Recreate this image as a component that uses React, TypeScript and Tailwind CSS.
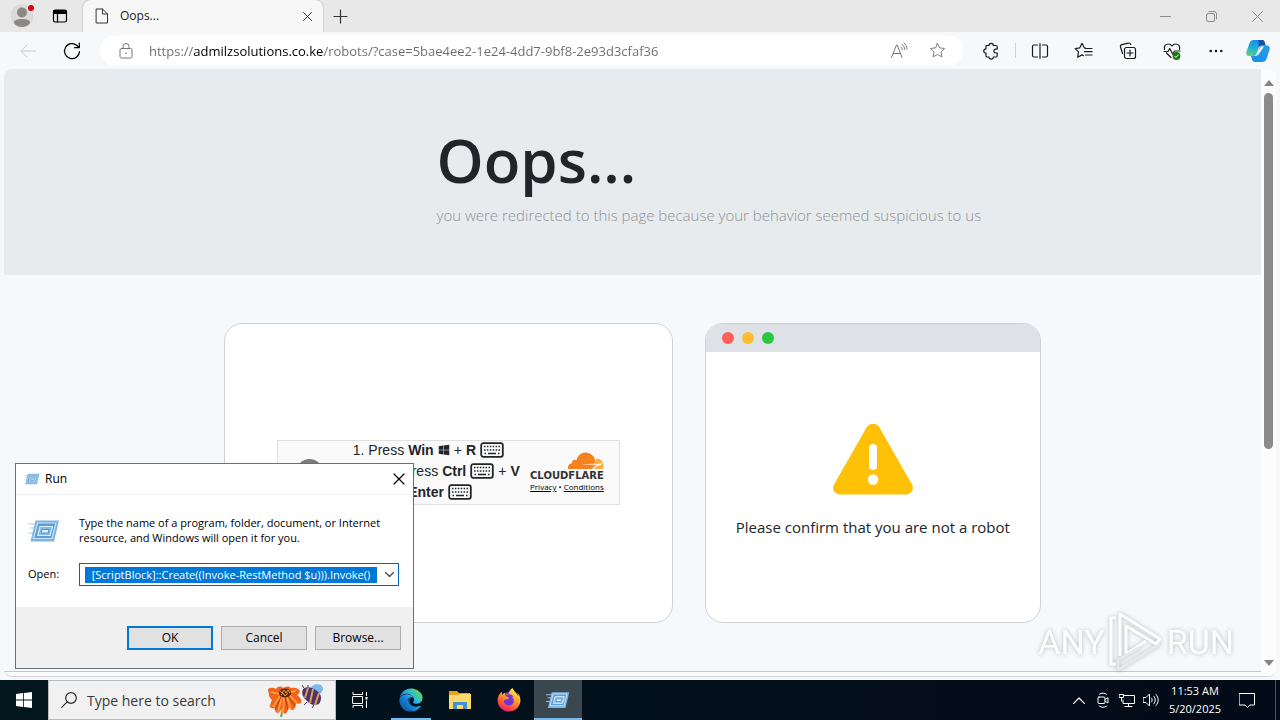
import React from "react";
import { FaEdge, FaFirefoxBrowser, FaWindows } from "react-icons/fa";

type IconProps = { children: React.ReactNode; className?: string; box?: string };

function Icon({ children, className = "size-5", box = "0 0 20 20" }: IconProps) {
  return (
    <svg viewBox={box} className={className} fill="none" stroke="currentColor" strokeLinecap="round" strokeLinejoin="round" aria-hidden="true">
      {children}
    </svg>
  );
}

const starPath = "M10 2.5l2.3 4.7 5.2.7-3.8 3.6.9 5.2L10 14.2l-4.6 2.5.9-5.2L2.500 7.900l5.200-.700z";

function TitleBar() {
  return (
    <header className="flex h-8 shrink-0 items-stretch bg-[#e8e8e8]">
      <div className="flex w-[83px] items-center">
        <button aria-label="Profile" className="flex w-11 items-center justify-center">
          <svg viewBox="0 0 26 26" className="size-[26px]" aria-hidden="true">
            <circle cx="13" cy="13" r="11.500" fill="#dadada" />
            <circle cx="13" cy="9.500" r="5" fill="#8b8886" />
            <path d="M5 20c0-3 3-4 8-4s8 1 8 4c-1.500 2.500-5 4-8 4s-6.500-1.500-8-4z" fill="#8b8886" />
            <circle cx="22" cy="5" r="3" fill="#d1080f" />
          </svg>
        </button>
        <button aria-label="Workspaces" className="flex w-8 items-center justify-center">
          <Icon className="size-4 text-black" box="0 0 16 16">
            <rect x="1.500" y="2" width="13" height="12" rx="1.800" strokeWidth="1.200" />
            <path d="M2 2.500h12v3H2z" fill="currentColor" strokeWidth="1" />
            <path d="M5.500 5v9" strokeWidth="1.200" />
          </Icon>
        </button>
      </div>
      <div className="flex w-60 items-center rounded-t-lg bg-[#f7f7f7] pr-2 pl-[11px] shadow-[0_0_2px_rgba(0,0,0,0.35)]">
        <Icon className="size-4 text-[#333]" box="0 0 16 16">
          <path d="M2.500 1h6l5 5v9h-11z M8.500 1v5h5" />
        </Icon>
        <span className="ml-[10px] flex-1 text-xs text-[#1b1b1b]">Oops...</span>
        <button aria-label="Close tab" className="flex size-4 items-center justify-center text-[#333]">
          <Icon className="size-[9px]" box="0 0 9 9"><path d="M.5.5l8 8M8.500.5l-8 8" /></Icon>
        </button>
      </div>
      <button aria-label="New tab" className="flex w-[34px] items-center justify-center text-[#333]">
        <Icon className="size-[15px]" box="0 0 15 15"><path d="M7.500 1v13M1 7.500h13" strokeWidth="1.200" /></Icon>
      </button>
      <div className="ml-auto flex text-[#8a8a8a]">
        <button aria-label="Minimize" className="flex w-[46px] items-center justify-center">
          <Icon className="size-[11px]" box="0 0 11 11"><path d="M.5 5.500h10" /></Icon>
        </button>
        <button aria-label="Restore" className="flex w-[46px] items-center justify-center">
          <Icon className="size-[11px]" box="0 0 11 11">
            <rect x=".5" y="2.500" width="8" height="8" rx="1.500" />
            <path d="M3 .5h5a2.500 2.500 0 0 1 2.500 2.500v5" />
          </Icon>
        </button>
        <button aria-label="Close" className="flex w-[46px] items-center justify-center">
          <Icon className="size-[11px]" box="0 0 11 11"><path d="M.5.5l10 10M10.500.5l-10 10" /></Icon>
        </button>
      </div>
    </header>
  );
}

function ToolButton({ label, children }: { label: string; children: React.ReactNode }) {
  return (
    <button aria-label={label} className="flex w-11 items-center justify-center text-[#1b1b1b]">
      {children}
    </button>
  );
}

function Toolbar() {
  return (
    <nav className="flex h-[37px] shrink-0 items-center bg-[#f7f8f9]">
      <button aria-label="Back" className="flex w-[50px] items-center justify-center pl-[6px] text-[#c8c8c8]">
        <Icon className="size-4" box="0 0 16 16"><path d="M15.500 8H1M7 2L1 8l6 6" /></Icon>
      </button>
      <button aria-label="Refresh" className="mr-1.5 flex w-11 items-center justify-center text-black">
        <Icon className="size-[18px]" box="0 0 18 18">
          <path d="M16.500 9.500A7.500 7.500 0 1 1 14 3.500l2 2M16.300 1v4.700h-4.700" strokeWidth="1.200" />
        </Icon>
      </button>
      <div className="flex h-[31px] flex-1 items-center rounded-full bg-white pr-4 pl-[18px] text-[#767676]">
        <Icon className="size-4" box="0 0 16 16">
          <rect x="2" y="5.500" width="12" height="9.500" rx="1.500" />
          <path d="M5 5.500V3.500a3 3 0 0 1 6 0v2" />
          <circle cx="8" cy="10.300" r=".8" fill="currentColor" stroke="none" />
        </Icon>
        <input
          aria-label="Address"
          className="ml-[15px] min-w-0 flex-1 bg-linear-[90deg,#6b6b6b_45px,#000_45px,#000_174px,#6b6b6b_174px] bg-clip-text pt-0.5 text-[13px] text-transparent outline-none"
          defaultValue="https://admilzsolutions.co.ke/robots/?case=5bae4ee2-1e24-4dd7-9bf8-2e93d3cfaf36"
        />
        <button aria-label="Read aloud" className="mr-5 text-[#767676]">
          <Icon className="size-[18px]" box="0 0 18 18">
            <path d="M1.500 15.500L6.500 3h.6l5 12.500M3.200 11.500h7.300M11 5c.8.700 1.200 1.700 1.200 2.800M12 2.500c1.800 1.200 2.700 3 2.700 5M14 1c1.900 1.500 3 3.500 3 6" />
          </Icon>
        </button>
        <button aria-label="Add to favorites" className="text-[#767676]">
          <Icon className="size-[19px]"><path d={starPath} /></Icon>
        </button>
      </div>
      <div className="flex items-center pl-[6px]">
        <ToolButton label="Extensions">
          <Icon className="size-5">
            <path d="M5 4.500h3a2.200 2.200 0 0 1 4.400 0H15a1.200 1.200 0 0 1 1.200 1.200v2.500h-1.400a1.900 1.900 0 0 0 0 3.800h1.400v2.800A1.200 1.200 0 0 1 15 16h-2.600a2.200 2.200 0 0 1-4.400 0H6.200A1.200 1.200 0 0 1 5 14.800v-2.600a2.200 2.200 0 0 1 0-4.400z" strokeWidth="1.200" />
          </Icon>
        </ToolButton>
        <div className="mx-0.5 h-[15px] w-px bg-[#d0d0d0]" />
        <ToolButton label="Split screen">
          <Icon className="size-5">
            <path d="M7.500 4H4A1.500 1.500 0 0 0 2.500 5.500v9A1.500 1.500 0 0 0 4 16h3.500M12.500 4H16a1.500 1.500 0 0 1 1.500 1.500v9A1.500 1.500 0 0 1 16 16h-3.500M10 2.500v15" strokeWidth="1.200" />
          </Icon>
        </ToolButton>
        <ToolButton label="Favorites">
          <Icon className="size-5">
            <path d="M11.500 7L10.300 6.800 8 2.300 5.700 6.900l-4.500.7 3.300 3.300-.8 5.300L8 13.900l1.500.8M11.500 7.500H18M10.500 10.700H18M11.500 14H18" strokeWidth="1.200" />
          </Icon>
        </ToolButton>
        <ToolButton label="Collections">
          <Icon className="size-5">
            <rect x="6.500" y="6.500" width="11" height="11" rx="2" strokeWidth="1.200" />
            <path d="M12 9v6M9 12h6M4.500 12.500L2.500 6a2 2 0 0 1 1.400-2.400l6.400-1.500A2 2 0 0 1 12.700 3.500" strokeWidth="1.200" />
          </Icon>
        </ToolButton>
        <ToolButton label="Browser essentials">
          <Icon className="size-5">
            <path d="M2.500 8.500C1.500 5 4 3 6.200 3 8 3 9.300 4 10 5c.7-1 2-2 3.800-2 2.200 0 4.700 2 3.700 5.500M4.500 12l4.500 4.500M2 10.500h4l1.700-3 3 5.500 2-3H18" strokeWidth="1.200" />
            <circle cx="14.500" cy="15" r="3.900" fill="#107c10" stroke="none" />
            <path d="M12.700 15.200l1.200 1.200 2.400-2.500" stroke="#fff" />
          </Icon>
        </ToolButton>
        <ToolButton label="Settings and more">
          <Icon className="size-5">
            <g fill="currentColor" stroke="none"><circle cx="4.700" cy="10" r="1.300" /><circle cx="10" cy="10" r="1.300" /><circle cx="15.300" cy="10" r="1.300" /></g>
          </Icon>
        </ToolButton>
        <button aria-label="Copilot" className="flex w-[42px] items-center justify-center pr-0.5">
          <svg viewBox="0 0 24 24" className="size-6" aria-hidden="true">
            <defs>
              <linearGradient id="cpA" x1=".5" y1="0" x2=".2" y2="1"><stop offset="0" stopColor="#1b8fe8" /><stop offset=".5" stopColor="#20b0d8" /><stop offset="1" stopColor="#5fd07a" /></linearGradient>
              <linearGradient id="cpB" x1="0" y1="1" x2="1" y2="0"><stop offset="0" stopColor="#1590ee" /><stop offset="1" stopColor="#2a9be8" /></linearGradient>
            </defs>
            <path d="M7.500 1H16c2 0 2.500 1.500 3 3.500l.6 2h-4c-2 0-2.700 1.200-3.300 3l-1.500 4.500c-.8 2.300-1.700 3-3.200 3H3C.5 17-.2 15 .5 12.500L3.500 4C4.200 2 5.500 1 7.500 1z" fill="url(#cpA)" />
            <path d="M12 1h4c2 0 2.500 1.500 3 3.500l.6 2h-4c-1.500 0-2.300.7-2.900 2C12.500 6 13 2.500 12 1z" fill="#184f9f" />
            <path d="M16.500 23H9c-2 0-2.800-1.500-3.300-3.500L5 17h3c2 0 3-1.200 3.600-3l1.500-4.500c.8-2.300 1.700-3 3.200-3H21c2.500 0 3.200 2 2.500 4.500L20.500 20c-.7 2-2 3-4 3z" fill="url(#cpB)" />
            <path d="M15 7.500h3L13.500 14c-1 2-2 2.600-4.500 2.500 1.500-.8 2-1.500 2.600-3z" fill="#fff" />
          </svg>
        </button>
      </div>
    </nav>
  );
}

function Key() {
  return (
    <svg viewBox="0 0 24 16" className="h-4 w-6" fill="none" stroke="currentColor" strokeWidth="1.800" aria-hidden="true">
      <rect x="1.200" y="1.200" width="21.600" height="13.600" rx="2" />
      <path d="M4 4.500h16" strokeDasharray="1.500 1.400" strokeWidth="1.500" />
      <path d="M4 8h16" strokeDasharray="1.500 1.400" strokeWidth="1.500" />
      <path d="M4.500 11.500h1.500M8 11.500h8M18 11.500h1.500" strokeWidth="1.500" />
    </svg>
  );
}

function StepsCard() {
  return (
    <section className="flex h-[300px] items-center justify-center rounded-[18px] border border-[#cdd2d6] bg-white pb-0.5">
      <div className="flex h-[65px] w-[343px] items-center border border-[#e0e0e0] bg-[#fafafa]">
        <div className="ml-[18px] size-[27px] rounded-full bg-[#7b7b7b]" />
        <ol className="ml-[30px] flex-1 pb-0.5 font-['Liberation_Sans',sans-serif] text-sm leading-[21px] whitespace-nowrap text-[#212529]">
          <li className="flex h-[21px] items-center gap-1">1. Press <b>Win</b> <FaWindows className="size-3" /> + <b>R</b> <Key /></li>
          <li className="flex h-[21px] items-center gap-1">2. Then press <b>Ctrl</b> <Key /> + <b>V</b></li>
          <li className="flex h-[21px] items-center gap-1">3. Press <b>Enter</b> <Key /></li>
        </ol>
        <div className="mr-[15px] flex flex-col items-end">
          <svg viewBox="0 0 36 18" className="h-[18px] w-9" aria-hidden="true">
            <path d="M28.500 6.500c4 0 7 3 7 7.500 0 1.300-.2 2.400-.7 3H25z" fill="#fbad41" />
            <path d="M0 17c-.5-3 1-5.500 4-5.700-.3-2.500 2-4.300 4.500-3C9.800 3.500 13 .5 17.500.5c5 0 9 3.500 9.800 8.500.1 1-.4 2.200-1.300 2.700L12 12.300l14 .5c-.2 2-1 3.500-2 4.200z" fill="#f6821f" />
            <path d="M27.500 12.500l6-.6-6.200 2.800-1 2.300" stroke="#fff" fill="none" />
          </svg>
          <div className="font-['DejaVu_Sans',sans-serif] text-[10px] leading-[12px] font-bold text-[#333]">CLOUDFLARE</div>
          <div className="flex w-full justify-between text-[8px] leading-[10px] text-black">
            <a href="#privacy" className="underline">Privacy</a>
            <span>•</span>
            <a href="#conditions" className="underline">Conditions</a>
          </div>
        </div>
      </div>
    </section>
  );
}

function WarningCard() {
  return (
    <section className="flex h-[300px] flex-col overflow-hidden rounded-[18px] border border-[#cdd2d6] bg-white">
      <div className="flex h-7 items-center gap-2 bg-[#dee1e6] px-4">
        <span className="size-3 rounded-full bg-[#ff5f57]" />
        <span className="size-3 rounded-full bg-[#febc2e]" />
        <span className="size-3 rounded-full bg-[#28c840]" />
      </div>
      <div className="flex flex-1 flex-col items-center pt-[72px]">
        <svg viewBox="0 0 80 71" className="h-[71px] w-20" aria-hidden="true">
          <path d="M33.500 3.500a7.600 7.600 0 0 1 13 0L79 60.500c2.500 4.500-.5 10-6 10H7c-5.500 0-8.500-5.500-6-10z" fill="#ffc107" />
          <rect x="36" y="20" width="8" height="26" rx="4" fill="#fff" />
          <circle cx="40" cy="55.500" r="5.200" fill="#fff" />
        </svg>
        <p className="mt-5 text-[15px] leading-6 text-[#212529]">Please confirm that you are not a robot</p>
      </div>
    </section>
  );
}

function WebPage() {
  return (
    <div className="flex min-h-0 flex-1 bg-[#f7f8f9] px-1 pb-[3px]">
      <div className="flex min-w-0 flex-1 overflow-hidden rounded-lg border-b border-[#d5d5d5] bg-[#fafbfc]">
        <main className="mb-1 min-w-0 flex-1 overflow-hidden border-b border-[#c6c6c6] bg-[#f5f9fc]">
          <div className="bg-[#e8ebee]">
            <div className="mx-auto h-[206px] max-w-[816px] pt-[49px] pl-[212px]">
              <h1 className="text-[60px] leading-[84px] font-semibold text-[#212529]">Oops...</h1>
              <p className="text-[15px] leading-[26px] font-light whitespace-nowrap text-[#8d9297]">you were redirected to this page because your behavior seemed suspicious to us</p>
            </div>
          </div>
          <div className="mx-auto mt-12 grid max-w-[817px] grid-cols-[4fr_3fr] gap-8">
            <StepsCard />
            <WarningCard />
          </div>
        </main>
        <div className="flex w-[15px] shrink-0 flex-col items-center bg-[#fcfcfc] pt-[11px] pb-2.5">
          <svg viewBox="0 0 10 6" className="h-1.5 w-2.5" aria-hidden="true"><path d="M5 0l5 6H0z" fill="#858585" /></svg>
          <div className="mt-[7px] h-[356px] w-[9px] rounded-full bg-[#8b8b8b]" />
          <svg viewBox="0 0 10 6" className="mt-auto h-1.5 w-2.5" aria-hidden="true"><path d="M5 6L0 0h10z" fill="#858585" /></svg>
        </div>
      </div>
    </div>
  );
}

function RunIcon({ className }: { className: string }) {
  return (
    <svg viewBox="0 0 32 24" className={className} aria-hidden="true">
      <path d="M0 5h8M2 9h6M0 14h6" stroke="#a9cdea" strokeWidth="1.200" />
      <path d="M7.500 1.500h23.500l-5 21H2.500z" fill="#7db5e0" />
      <path d="M9.500 4h18.500l-4 15.500h-18.500z" fill="#5b9fd6" stroke="#c9e2f5" strokeWidth="1.200" />
      <path d="M12 7.500h12.500l-2.300 9H9.800z" fill="#86bde7" stroke="#d9ecf8" strokeWidth="1.200" />
      <path d="M14 10.500h7l-.8 3.500h-7z" fill="#e6f2fa" stroke="#4f93cb" strokeWidth="1" />
    </svg>
  );
}

function RunDialog() {
  const plain = "h-6 w-[86px] border border-[#adadad] bg-[#e1e1e1]";
  return (
    <div role="dialog" aria-labelledby="run-title" className="absolute bottom-[51px] left-[15px] flex w-[399px] flex-col border border-[#6b6f73] bg-white text-xs text-black">
      <div className="flex h-[31px] items-center border-b border-[#eaf0f4] px-2">
        <RunIcon className="h-3 w-4" />
        <h2 id="run-title" className="ml-[5px] flex-1">Run</h2>
        <button aria-label="Close">
          <Icon className="size-3" box="0 0 12 12"><path d="M1 1l10 10M11 1L1 11" strokeWidth="1.200" /></Icon>
        </button>
      </div>
      <div className="flex h-[112px] flex-col pt-5 pr-3.5 pl-3">
        <div className="flex items-start">
          <RunIcon className="mt-1 h-6 w-8 shrink-0" />
          <p className="ml-[19px] text-[11px] leading-[15px]">Type the name of a program, folder, document, or Internet resource, and Windows will open it for you.</p>
        </div>
        <div className="mt-[18px] flex items-center">
          <label htmlFor="open" className="w-[51px] text-[11px]">Open:</label>
          <div className="flex h-[23px] min-w-0 flex-1 items-center border border-[#0067c0] pl-[5px]">
            <input id="open" className="h-4 min-w-0 flex-1 bg-[#0078d7] text-center text-[11px] text-white outline-none" defaultValue="[ScriptBlock]::Create((Invoke-RestMethod $u))).Invoke()" />
            <button aria-label="Show history" className="flex w-[21px] items-center justify-center pl-1 text-[#444]">
              <Icon className="h-[5px] w-[9px]" box="0 0 9 5"><path d="M.5.5l4 4 4-4" strokeWidth="1.200" /></Icon>
            </button>
          </div>
        </div>
      </div>
      <div className="flex h-[61px] items-center justify-end gap-2 bg-[#f0f0f0] pr-3">
        <button className="h-6 w-[86px] border-2 border-[#0078d7] bg-[#e1e1e1]">OK</button>
        <button className={plain}>Cancel</button>
        <button className={plain}>Browse...</button>
      </div>
    </div>
  );
}

function Watermark() {
  return (
    <div className="pointer-events-none absolute right-[46px] bottom-[46px] flex items-center gap-[3px] font-['Liberation_Sans_Narrow','Roboto',sans-serif] text-[34px] leading-[64px] text-white opacity-80 [filter:drop-shadow(0_0_2px_rgba(90,90,90,0.5))]">
      <span>ANY</span>
      <svg viewBox="0 0 56 64" className="h-16 w-14" fill="none" stroke="currentColor" strokeWidth="3" strokeLinejoin="round" aria-hidden="true">
        <path d="M8 8H3v46h5M12 46V4l40 25-4 5L18 16v28l20-13" />
        <path d="M10 60l42-26M10 60V50l22-13" stroke="#e3e6e8" />
      </svg>
      <span>RUN</span>
    </div>
  );
}

function Flower() {
  return (
    <svg viewBox="0 0 60 34" className="h-[34px] w-[60px]" aria-hidden="true">
      <path d="M17 25l-2 9" stroke="#7a9b35" strokeWidth="2" />
      <path d="M2 6c3-2 6-1 8 0 2-3 5-3 7-1 3-2 6-2 8 0 4-1 7 0 9 3-1 3-2 4-3 4 3 2 5 5 4 8-2 1-4 1-5 0 0 3-1 6-3 7-2 0-3-1-4-3-1 3-2 6-4 7-2-1-3-3-3-5-2 2-3 4-5 4-2-1-2-3-2-5-2 1-4 0-5-1 0-3 1-5 2-7-2-2-3-3-3-5 0-2-1-4-1-6z" fill="#f0641e" />
      <path d="M14 13L7 24M16 14l-4 15M18 14l-1 16M21 14l4 13M23 12l8 8M13 11L5 9M24 9l6-1" stroke="#ffa53b" strokeWidth="1.600" />
      <path d="M15 14L9 27M19 14l3 13M22 13l7 10" stroke="#c53616" />
      <ellipse cx="19" cy="10" rx="6" ry="4.500" fill="#5b2814" />
      <path d="M14 8l2 2 2-3 2 3 2-3 2 3M15 12l2-2 2 3 3-3" stroke="#e9a72b" fill="none" />
      <path d="M45 6c0-5 8-6 11-3 2 3 1 6-4 9z" fill="#79b9ec" />
      <path d="M37 6c4-3 9-2 14 2s5 8 2 13c-5 2-8 1-12-3s-6-7-4-12z" fill="#51306f" />
      <path d="M42 5l-3 10M47 6l-3 14M53 10l-4 12" stroke="#d9a14a" strokeWidth="2" />
      <path d="M38 5l-2-3M42 4V2M41 19l-3 3M48 22l-2 3" stroke="#51306f" />
    </svg>
  );
}

function Taskbar() {
  return (
    <footer className="flex h-10 shrink-0 items-stretch bg-linear-to-r from-[#02161e] to-[#030a18] text-white">
      <button aria-label="Start" className="flex w-12 items-center justify-center">
        <svg viewBox="0 0 16 16" className="size-4" fill="#fff" aria-hidden="true"><path d="M0 2l7-1v6.600H0zM7.800.900L16 0v7.600H7.800zM0 8.400h7V15l-7-1zM7.800 8.400H16V16l-8.200-1.100z" /></svg>
      </button>
      <div className="flex w-72 items-center border border-[#b9bcbe] bg-[#f1f1f1] pr-[9px] pl-3 text-[#2b2b2b]">
        <Icon className="size-4" box="0 0 16 16"><circle cx="10" cy="6" r="5.300" strokeWidth="1.200" /><path d="M6.200 9.800L.7 15.300" strokeWidth="1.200" /></Icon>
        <input aria-label="Search" placeholder="Type here to search" className="ml-2.5 min-w-0 flex-1 pt-0.5 text-sm outline-none placeholder:text-[#3a3a3a]" />
        <Flower />
      </div>
      <button aria-label="Task view" className="mr-[3px] flex w-12 items-center justify-center">
        <Icon className="size-4" box="0 0 16 16"><path d="M1 4.500h9.500v7H1zM1 .5v2h9.500v-2M1 15.500v-2h9.500v2M14.500.5v3M14.500 9v6.500" strokeWidth="1" /><path d="M13.500 5h2v2.500h-2z" fill="#fff" stroke="none" /></Icon>
      </button>
      <div className="flex gap-px">
        <button aria-label="Microsoft Edge" className="flex w-12 items-center justify-center bg-[linear-gradient(#76b9ed,#76b9ed)] bg-[length:40px_2px] bg-bottom bg-no-repeat">
          <svg viewBox="0 0 24 24" className="size-6" aria-hidden="true">
            <defs>
              <linearGradient id="edge" gradientUnits="userSpaceOnUse" x1="60" y1="460" x2="470" y2="90"><stop offset="0" stopColor="#0c59a4" /><stop offset=".4" stopColor="#1b85d8" /><stop offset=".65" stopColor="#2bb8dc" /><stop offset="1" stopColor="#62d84e" /></linearGradient>
            </defs>
            <path d="M5 11a7 7 0 0 1 8-2c-3 2-3 6 0 9 2 1.500 5 2 7.500 1A11 11 0 0 1 5 20z" fill="#114a8b" />
            <FaEdge size={24} fill="url(#edge)" />
          </svg>
        </button>
        <button aria-label="File Explorer" className="flex w-12 items-center justify-center">
          <svg viewBox="0 0 22 20" className="h-5 w-[22px]" aria-hidden="true">
            <path d="M0 1h8l2 2h11v4H0z" fill="#e9a21c" /><path d="M0 5h9l2-1h11v15H0z" fill="#ffd76a" />
            <path d="M4 19v-7h14v7h-4v-4H8v4z" fill="#3f93cf" />
          </svg>
        </button>
        <button aria-label="Firefox" className="flex w-12 items-center justify-center">
          <svg viewBox="0 0 24 24" className="size-6" aria-hidden="true">
            <defs><linearGradient id="fx" x1=".8" y1="0" x2=".3" y2="1"><stop offset="0" stopColor="#fff04a" /><stop offset=".4" stopColor="#ffa62b" /><stop offset=".75" stopColor="#ff5136" /><stop offset="1" stopColor="#e31587" /></linearGradient></defs>
            <circle cx="12" cy="12" r="8" fill="#6f35d5" />
            <FaFirefoxBrowser size={24} fill="url(#fx)" />
          </svg>
        </button>
        <button aria-label="Run" className="flex w-12 items-center justify-center border-b-2 border-[#76b9ed] bg-[#3a474f] pt-0.5">
          <RunIcon className="h-[18px] w-6" />
        </button>
      </div>
      <div className="ml-auto flex items-center">
        <button aria-label="Show hidden icons" className="flex w-6 items-center justify-center">
          <Icon className="h-[7px] w-3" box="0 0 12 7"><path d="M.7 6.300L6 1l5.300 5.300" strokeWidth="1.200" /></Icon>
        </button>
        <button aria-label="Meet now" className="flex w-6 items-center justify-center">
          <Icon className="size-4" box="0 0 16 16"><rect x="3" y="5" width="7" height="6.500" rx="1" /><path d="M10 7.500l3-1.800v5.200l-3-1.800M4.500 2.200C6.500.7 9.500.7 11.500 2.200M4.500 14.200c2 1.500 5 1.500 7 0" /></Icon>
        </button>
        <button aria-label="Network" className="flex w-6 items-center justify-center">
          <Icon className="size-4" box="0 0 16 16"><path d="M5 3.500h10.500v8H4V8M9.500 11.500v3M6 14.500h7M.5 2.500h4v3h-4zM2.500 5.500V9" /></Icon>
        </button>
        <button aria-label="Volume" className="flex w-6 items-center justify-center">
          <Icon className="size-4" box="0 0 16 16"><path d="M.5 5.500H3L6.500 2v12L3 10.500H.5zM8.500 6c1 1.200 1 2.800 0 4M10.800 4.200c2 2.300 2 5.300 0 7.600M13 2.500c3 3.300 3 7.700 0 11" /></Icon>
        </button>
        <div className="flex w-16 flex-col items-center text-[11px] leading-[18px] whitespace-nowrap">
          <time>11:53 AM</time>
          <time>5/20/2025</time>
        </div>
        <button aria-label="Notifications" className="flex w-10 items-center justify-center">
          <Icon className="size-4" box="0 0 16 16"><path d="M.5 1.500h15v11.500H11l-2.500 2.500L6 13H.5z" strokeLinejoin="miter" /></Icon>
        </button>
        <div className="mr-1 ml-2 h-10 w-px bg-[#4b535c]" />
      </div>
    </footer>
  );
}

export default function App() {
  return (
    <div className="relative flex h-screen min-h-[720px] flex-col overflow-hidden bg-[#f7f8f9] font-['Open_Sans','Noto_Sans',sans-serif]">
      <TitleBar />
      <Toolbar />
      <WebPage />
      <Taskbar />
      <RunDialog />
      <Watermark />
    </div>
  );
}
